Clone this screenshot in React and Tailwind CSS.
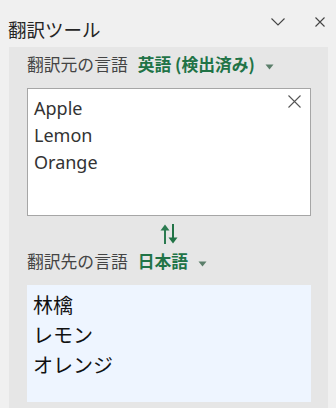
const jp = { fontFamily: '"Noto Sans CJK JP", "Noto Sans", sans-serif' };
const latin = { fontFamily: '"Noto Sans", "Noto Sans CJK JP", sans-serif' };

const Caret = () => (
  <svg width="9" height="6" viewBox="0 0 9 6" className="ml-[10px] mt-[3px]">
    <path d="M0.5 0.5 H8.5 L4.5 5.5 Z" fill="#5b7e6a" />
  </svg>
);

const Cross = ({ size, color }) => (
  <svg width={size} height={size} viewBox={`0 0 ${size} ${size}`} fill="none">
    <path d={`M0.5 0.5 L${size - 0.5} ${size - 0.5} M${size - 0.5} 0.5 L0.5 ${size - 0.5}`} stroke={color} strokeWidth="1.1" />
  </svg>
);

const SwapIcon = () => (
  <svg width="20" height="22" viewBox="0 0 20 22" fill="none">
    <path d="M6 21 V3" stroke="#2b7a50" strokeWidth="2" />
    <path d="M1.5 7.5 L6 1.5 L10.5 7.5 Z" fill="#2b7a50" />
    <path d="M14 1 V19" stroke="#217346" strokeWidth="2" />
    <path d="M9.5 14.5 L14 20.5 L18.5 14.5 Z" fill="#217346" />
  </svg>
);

export default function App() {
  return (
    <div className="w-[336px] h-[408px] bg-[#f0f0f0] overflow-hidden" style={jp}>
      {/* header */}
      <div className="h-[47px] flex items-center pl-[8px] pr-[11px]">
        <h1 className="text-[18.5px] leading-[24px] text-[#252525] mt-[10px]">翻訳ツール</h1>
        <div className="ml-auto flex items-center gap-[30px] mt-[-3px]">
          <svg width="14" height="8" viewBox="0 0 14 8" fill="none">
            <path d="M0.5 0.5 L7 7 L13.5 0.5" stroke="#444" strokeWidth="1.1" />
          </svg>
          <Cross size={10} color="#444" />
        </div>
      </div>

      {/* panel */}
      <div className="ml-[9px] w-[319px] h-[361px] bg-[#e6e6e6] pl-[18px] pr-[17px] pt-[6px]">
        <div className="flex items-center h-[24px] text-[16.8px]">
          <span className="text-[#444]">翻訳元の言語</span>
          <span className="ml-[10px] font-bold text-[#217346]">英語 (検出済み)</span>
          <Caret />
        </div>

        <div className="relative mt-[11px] h-[128px] bg-white border border-[#a6a6a6] pl-[6px] pt-[6px]">
          <div className="text-[18px] leading-[27px] text-[#333]" style={latin}>
            <p>Apple</p>
            <p>Lemon</p>
            <p>Orange</p>
          </div>
          <button className="absolute right-[9px] top-[6px] flex">
            <Cross size={13} color="#555" />
          </button>
        </div>

        <div className="flex justify-center mt-[7px] h-[22px]">
          <SwapIcon />
        </div>

        <div className="flex items-center h-[24px] mt-[5px] text-[16.8px]">
          <span className="text-[#444]">翻訳先の言語</span>
          <span className="ml-[10px] font-bold text-[#217346]">日本語</span>
          <Caret />
        </div>

        <div className="mt-[11px] h-[117px] bg-[#eef5ff] pl-[6px] pt-[5px]">
          <div className="text-[20px] leading-[30px] text-[#111]">
            <p>林檎</p>
            <p>レモン</p>
            <p>オレンジ</p>
          </div>
        </div>
      </div>
    </div>
  );
}
